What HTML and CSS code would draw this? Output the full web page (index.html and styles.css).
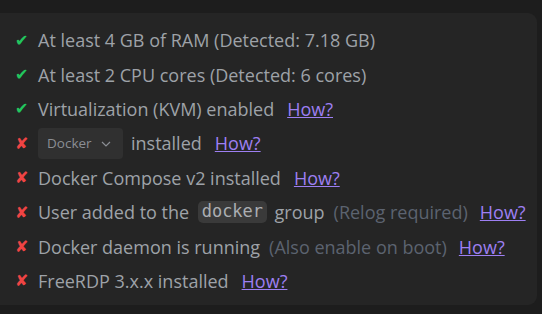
FILE: index.html
```html
<!DOCTYPE html>
<html>
<head>
<meta charset="utf-8">
<link rel="stylesheet" href="styles.css">
</head>
<body>
<div class="page">
  <div class="card">
    <ul class="checks">
      <li class="row"><span class="icon ok">✔</span><span class="label">At least 4 GB of RAM (Detected: 7.18 GB)</span></li>
      <li class="row"><span class="icon ok">✔</span><span class="label">At least 2 CPU cores (Detected: 6 cores)</span></li>
      <li class="row"><span class="icon ok">✔</span><span class="label">Virtualization (KVM) enabled</span><a class="how" href="#">How?</a></li>
      <li class="row"><span class="icon bad">✘</span><span class="select">Docker<svg class="chev" width="10" height="6" viewBox="0 0 10 6"><path d="M1 1l4 4 4-4" fill="none" stroke="currentColor" stroke-width="1.2"/></svg></span><span class="label">installed</span><a class="how" href="#">How?</a></li>
      <li class="row"><span class="icon bad">✘</span><span class="label">Docker Compose v2 installed</span><a class="how" href="#">How?</a></li>
      <li class="row"><span class="icon bad">✘</span><span class="label">User added to the</span><code class="code">docker</code><span class="label">group</span><span class="muted">(Relog required)</span><a class="how" href="#">How?</a></li>
      <li class="row"><span class="icon bad">✘</span><span class="label">Docker daemon is running</span><span class="muted">(Also enable on boot)</span><a class="how" href="#">How?</a></li>
      <li class="row"><span class="icon bad">✘</span><span class="label">FreeRDP 3.x.x installed</span><a class="how" href="#">How?</a></li>
    </ul>
  </div>
</div>
</body>
</html>
```

FILE: styles.css
```css
html, body {
  margin: 0;
  padding: 0;
  background: #1d1d1d;
  width: 542px;
  height: 314px;
  overflow: hidden;
}
.page {
  padding: 13px 5px 0 0;
}
.card {
  margin-left: -12px;
  background: #252525;
  border-radius: 9px;
  height: 292px;
  box-sizing: border-box;
  padding: 10px 0 0 27px;
  font-family: "Open Sans", "Noto Sans", sans-serif;
  font-size: 18px;
  color: #9ea2a8;
}
.checks {
  list-style: none;
  margin: 0;
  padding: 0;
  display: flex;
  flex-direction: column;
}
.row {
  height: 34.4px;
  display: flex;
  align-items: center;
  white-space: nowrap;
}
.icon {
  width: 23px;
  font-family: "DejaVu Sans", sans-serif;
  font-size: 16px;
  flex: none;
}
.ok { color: #22c55e; }
.bad { color: #ef4444; }
.label { margin-right: 9px; }
.muted { color: #5c6370; margin-right: 8px; }
.how {
  color: #9d7ff2;
  text-decoration: underline;
  margin-left: 4px;
}
.select {
  display: inline-flex;
  align-items: center;
  height: 31px;
  width: 85px;
  box-sizing: border-box;
  padding: 0 12px 0 9px;
  justify-content: space-between;
  background: #303030;
  border-radius: 4px;
  font-size: 13.5px;
  color: #8b8e94;
  margin-right: 8px;
}
.chev { color: #8b8e94; margin-top: 1px; }
.code {
  font-family: "DejaVu Sans Mono", monospace;
  font-size: 17px;
  background: #3a3a3a;
  color: #abaeb2;
  border-radius: 5px;
  padding: 0 3.5px;
  height: 22px;
  line-height: 20px;
  margin-right: 8px;
}
```
